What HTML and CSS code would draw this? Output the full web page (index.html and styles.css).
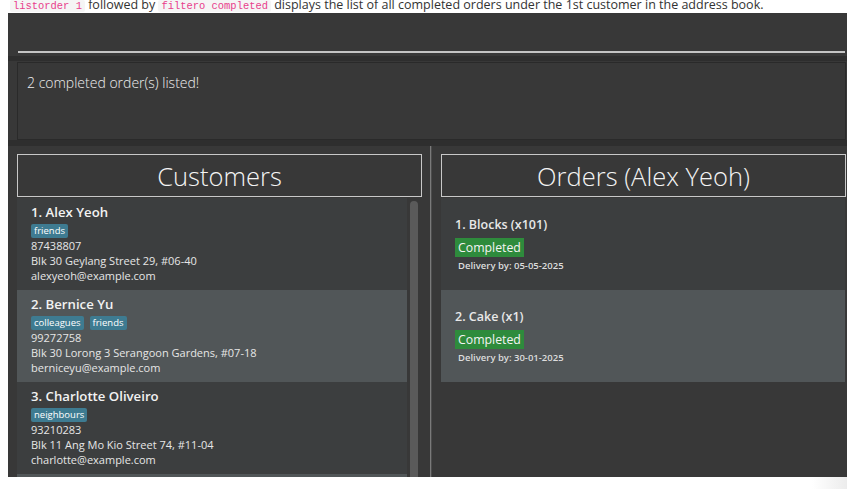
FILE: index.html
```html
<!DOCTYPE html>
<html lang="en">
<head>
<meta charset="utf-8">
<title>Address book</title>
<link rel="stylesheet" href="styles.css">
</head>
<body>
<div class="caption"><div class="caption-line"><code>listorder 1</code> followed by <code>filtero completed</code> displays the list of all completed orders under the 1st customer in the address book.</div></div>
<div class="app">
  <div class="command-box"><div class="command-field"></div></div>
  <div class="result-pane"><div class="result-box">2 completed order(s) listed!</div></div>
  <div class="split">
    <section class="panel">
      <div class="panel-title">Customers</div>
      <div class="list-wrap">
        <div class="list">
          <div class="cell even">
            <div class="name">1. Alex Yeoh</div>
            <div class="tags"><span class="tag">friends</span></div>
            <div class="small">87438807</div>
            <div class="small">Blk 30 Geylang Street 29, #06-40</div>
            <div class="small">alexyeoh@example.com</div>
          </div>
          <div class="cell odd">
            <div class="name">2. Bernice Yu</div>
            <div class="tags"><span class="tag">colleagues</span><span class="tag">friends</span></div>
            <div class="small">99272758</div>
            <div class="small">Blk 30 Lorong 3 Serangoon Gardens, #07-18</div>
            <div class="small">berniceyu@example.com</div>
          </div>
          <div class="cell even">
            <div class="name">3. Charlotte Oliveiro</div>
            <div class="tags"><span class="tag">neighbours</span></div>
            <div class="small">93210283</div>
            <div class="small">Blk 11 Ang Mo Kio Street 74, #11-04</div>
            <div class="small">charlotte@example.com</div>
          </div>
          <div class="cell odd"></div>
        </div>
        <div class="scrollbar"><div class="thumb"></div></div>
      </div>
    </section>
    <div class="divider"></div>
    <section class="panel">
      <div class="panel-title">Orders (Alex Yeoh)</div>
      <div class="list-wrap">
        <div class="list list-full">
          <div class="cell even order">
            <div class="name">1. Blocks (x101)</div>
            <div class="status"><span class="badge">Completed</span></div>
            <div class="delivery">Delivery by: 05-05-2025</div>
          </div>
          <div class="cell odd order">
            <div class="name">2. Cake (x1)</div>
            <div class="status"><span class="badge">Completed</span></div>
            <div class="delivery">Delivery by: 30-01-2025</div>
          </div>
        </div>
      </div>
    </section>
  </div>
</div>
<div class="below"></div>
</body>
</html>
```
FILE: styles.css
```css
* { box-sizing: border-box; }
html, body {
  margin: 0;
  padding: 0;
  width: 847px;
  height: 489px;
  overflow: hidden;
  background: #ffffff;
}
body { font-family: "Open Sans", "Noto Sans", sans-serif; }

.caption {
  height: 13px;
  overflow: hidden;
  padding-left: 10px;
}
.caption-line {
  margin-top: -3px;
  font-size: 12.5px;
  line-height: 16px;
  color: #333333;
  white-space: nowrap;
}
.caption-line code {
  font-family: "Liberation Mono", "DejaVu Sans Mono", monospace;
  font-size: 10.45px;
  color: #e83e8c;
  background: #f5f5f5;
  padding: 0 3px;
  border-radius: 2px;
}

.app {
  margin-left: 8px;
  width: 846px;
  height: 464px;
  background: #383838;
  display: flex;
  flex-direction: column;
}

.command-box {
  height: 43px;
  flex: 0 0 43px;
  padding: 0 9px 3px 10px;
  display: flex;
  align-items: flex-end;
}
.command-field {
  width: 100%;
  height: 2px;
  background: #c4c4c4;
}

.result-pane {
  flex: 0 0 90px;
  border-top: 5px solid #2e2e2e;
  border-bottom: 6px solid #2e2e2e;
  padding: 1px 8px 0 9px;
}
.result-box {
  height: 78px;
  border: 1px solid #2a2a2a;
  padding: 10px 10px 0 9px;
  font-size: 14px;
  font-weight: 300;
  color: #eeeeee;
}

.split {
  flex: 1;
  display: flex;
  min-height: 0;
}
.panel {
  flex: 0 0 422px;
  padding: 8px 8px 0 9px;
  display: flex;
  flex-direction: column;
  min-height: 0;
  overflow: hidden;
}
.divider {
  flex: 0 0 2px;
  border-left: 1px solid #7a7a7a;
  background: #4c4c4c;
}
.panel-title {
  height: 43px;
  flex: 0 0 43px;
  border: 1px solid #c8c8c8;
  text-align: center;
  font-size: 25.5px;
  font-weight: 300;
  line-height: 42px;
  color: #f4f4f4;
}

.list-wrap {
  margin-top: 1px;
  display: flex;
  flex: 1;
  min-height: 0;
  overflow: hidden;
}
.list { flex: 0 0 390px; }
.list-full { flex: 0 0 404px; }

.cell {
  height: 92px;
  padding: 5px 14px 0 14px;
  color: #ececec;
}
.even { background: #3c3e3f; }
.odd { background: #515658; }

.name {
  font-size: 13.2px;
  font-weight: 600;
  line-height: 18px;
  color: #f2f2f2;
}
.tags {
  margin-top: 3px;
  display: flex;
  gap: 6px;
  height: 14px;
}
.tag {
  background: #3e7b91;
  color: #ffffff;
  font-size: 9.5px;
  line-height: 12px;
  padding: 1px 3px;
  border-radius: 2px;
}
.small {
  font-size: 11px;
  line-height: 15px;
  color: #e6e6e6;
}

.scrollbar {
  flex: 0 0 8px;
  margin-left: 3px;
  padding-top: 3px;
}
.thumb {
  height: 400px;
  background: #5a5a5a;
  border-radius: 4px;
}

.order { padding-top: 18px; }
.order .name { font-size: 12.5px; color: #e8e8e8; }
.status {
  margin-top: 4px;
  display: flex;
  height: 19px;
}
.badge {
  background: #2e8b3c;
  color: #f4f4f4;
  font-size: 12.3px;
  font-weight: 500;
  line-height: 19px;
  padding: 0 3px;
}
.delivery {
  margin-top: 2px;
  padding-left: 3px;
  font-size: 9.5px;
  font-weight: 600;
  line-height: 13px;
  color: #dddddd;
}

.below {
  height: 12px;
  background: linear-gradient(90deg, #ffffff 0, #ffffff 812px, #ececec 847px);
}
```
